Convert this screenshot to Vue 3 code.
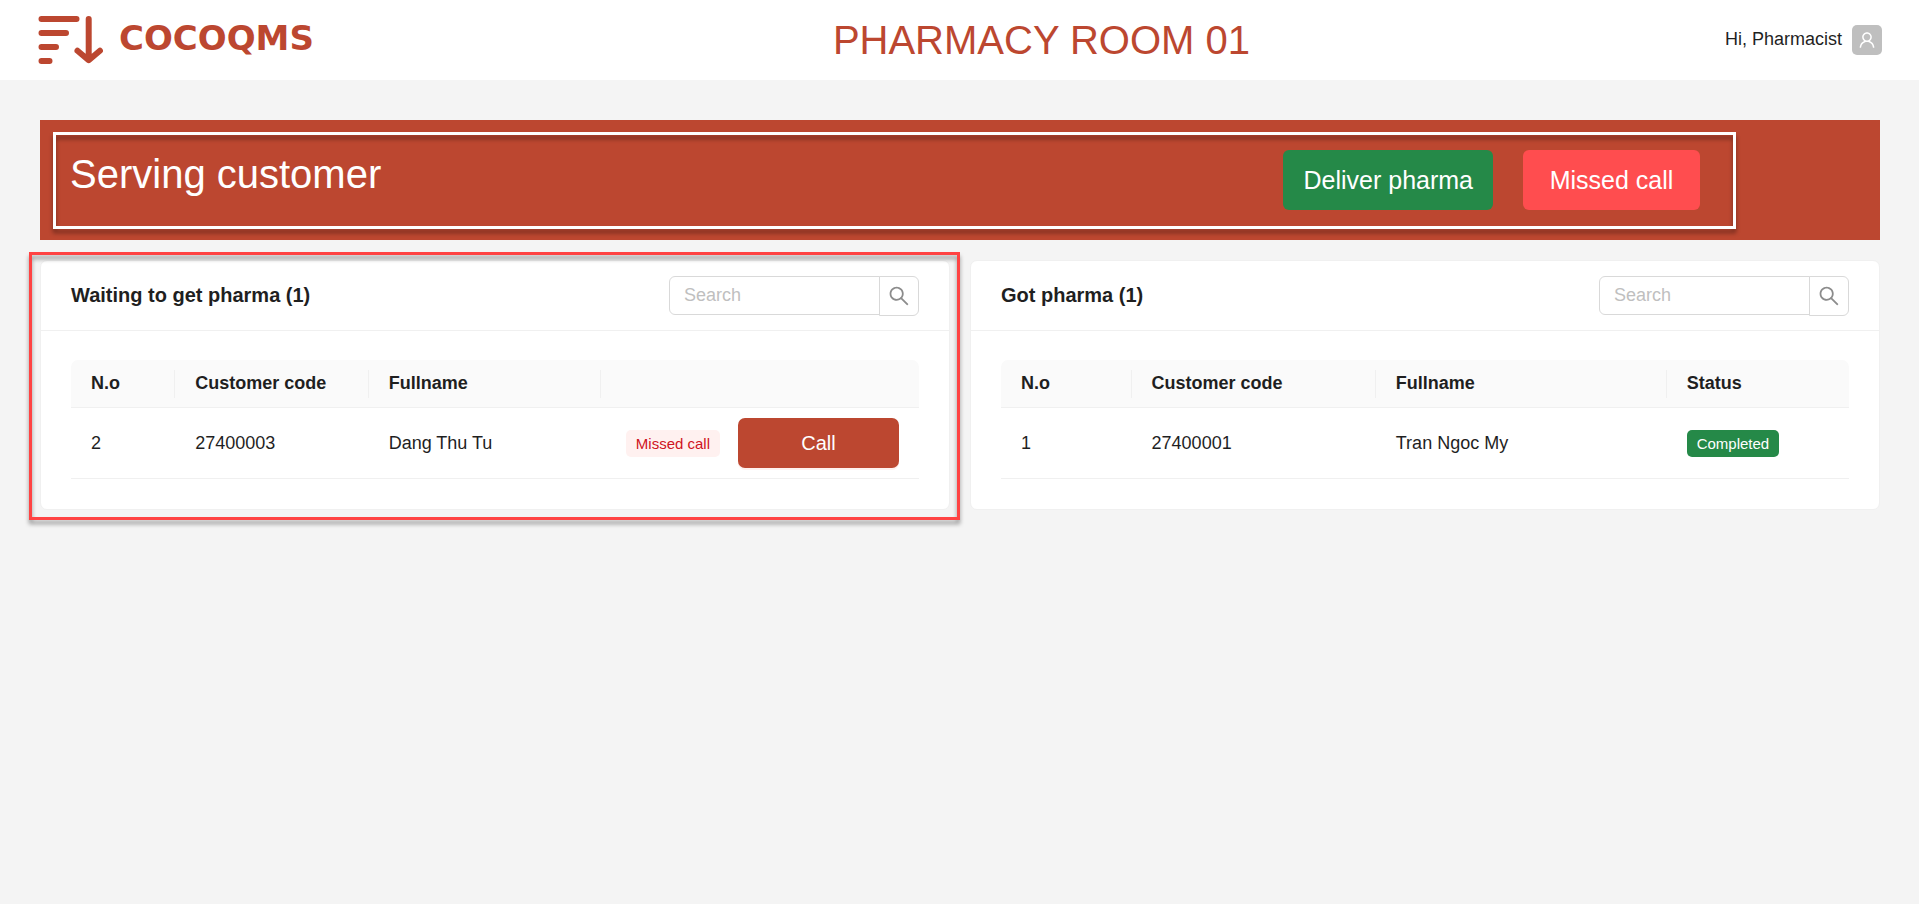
<template>
  <div class="page">
    <!-- header -->
    <header class="header">
      <a class="logo" href="#">
        <svg class="logo-icon" width="65" height="48" viewBox="0 0 65 48" aria-hidden="true">
          <path
            d="M3.5 3H38.5M3.5 17H28M3.5 31H18M3.5 45H11.5M50.7 3V43M39.5 34.8L50.7 44.2L61.9 34.8"
          />
        </svg>
        <span class="logo-text">COCOQMS</span>
      </a>
      <h1 class="room-title">PHARMACY ROOM 01</h1>
      <div class="user">
        <span class="user-name">Hi, Pharmacist</span>
        <button class="avatar" type="button" aria-label="Account">
          <svg width="20" height="20" viewBox="0 0 1024 1024" fill="currentColor">
            <path :d="userIcon" />
          </svg>
        </button>
      </div>
    </header>

    <main class="content">
      <!-- serving customer -->
      <section class="serving">
        <h2 class="serving-title">Serving customer</h2>
        <div class="serving-actions">
          <button class="btn btn-deliver" type="button">Deliver pharma</button>
          <button class="btn btn-missed" type="button">Missed call</button>
        </div>
        <div class="frame frame-white"></div>
      </section>

      <div class="cards">
        <!-- waiting list -->
        <section class="card">
          <div class="card-head">
            <h3 class="card-title">Waiting to get pharma ({{ waiting.length }})</h3>
            <form class="search" @submit.prevent>
              <input
                v-model="waitingSearch"
                class="search-input"
                type="text"
                placeholder="Search"
                aria-label="Search waiting customers"
              />
              <button class="search-btn" type="submit" aria-label="Search">
                <svg width="24" height="24" viewBox="0 0 1024 1024" fill="currentColor">
                  <path :d="searchIcon" />
                </svg>
              </button>
            </form>
          </div>
          <div class="card-body">
            <table class="table table-waiting">
              <thead>
                <tr>
                  <th class="col-no">N.o</th>
                  <th class="col-code">Customer code</th>
                  <th class="col-name">Fullname</th>
                  <th></th>
                </tr>
              </thead>
              <tbody>
                <tr v-for="item in waiting" :key="item.code">
                  <td>{{ item.no }}</td>
                  <td>{{ item.code }}</td>
                  <td>{{ item.name }}</td>
                  <td>
                    <div class="row-actions">
                      <span class="tag tag-missed">{{ item.status }}</span>
                      <button class="btn-call" type="button">Call</button>
                    </div>
                  </td>
                </tr>
              </tbody>
            </table>
          </div>
          <div class="frame frame-red"></div>
        </section>

        <!-- got list -->
        <section class="card">
          <div class="card-head">
            <h3 class="card-title">Got pharma ({{ got.length }})</h3>
            <form class="search" @submit.prevent>
              <input
                v-model="gotSearch"
                class="search-input"
                type="text"
                placeholder="Search"
                aria-label="Search served customers"
              />
              <button class="search-btn" type="submit" aria-label="Search">
                <svg width="24" height="24" viewBox="0 0 1024 1024" fill="currentColor">
                  <path :d="searchIcon" />
                </svg>
              </button>
            </form>
          </div>
          <div class="card-body">
            <table class="table table-got">
              <thead>
                <tr>
                  <th class="col-no">N.o</th>
                  <th class="col-code">Customer code</th>
                  <th class="col-name">Fullname</th>
                  <th>Status</th>
                </tr>
              </thead>
              <tbody>
                <tr v-for="item in got" :key="item.code">
                  <td>{{ item.no }}</td>
                  <td>{{ item.code }}</td>
                  <td>{{ item.name }}</td>
                  <td>
                    <div class="status-cell">
                      <span class="tag tag-completed">{{ item.status }}</span>
                    </div>
                  </td>
                </tr>
              </tbody>
            </table>
          </div>
        </section>
      </div>
    </main>
  </div>
</template>

<script setup>
import { ref } from "vue";

const waitingSearch = ref("");
const gotSearch = ref("");

const waiting = ref([
  { no: 2, code: "27400003", name: "Dang Thu Tu", status: "Missed call" },
]);

const got = ref([
  { no: 1, code: "27400001", name: "Tran Ngoc My", status: "Completed" },
]);

// icon paths
const searchIcon =
  "M909.6 854.5L649.9 594.8C690.2 542.7 712 479 712 412c0-80.2-31.3-155.4-87.9-212.1-56.6-56.7-132-87.9-212.1-87.9s-155.5 31.3-212.1 87.9C143.2 256.5 112 331.8 112 412c0 80.1 31.3 155.5 87.9 212.1C256.5 680.8 331.8 712 412 712c67 0 130.6-21.8 182.7-62l259.7 259.6a8.2 8.2 0 0011.6 0l43.6-43.5a8.2 8.2 0 000-11.6zM570.4 570.4C528 612.7 471.8 636 412 636s-116-23.3-158.4-65.6C211.3 528 188 471.8 188 412s23.3-116.1 65.6-158.4C296 211.3 352.2 188 412 188s116.1 23.2 158.4 65.6S636 352.2 636 412s-23.3 116.1-65.6 158.4z";
const userIcon =
  "M858.5 763.6a374 374 0 00-80.6-119.5 375.63 375.63 0 00-119.5-80.6c-.4-.2-.8-.3-1.2-.5C719.5 518 760 444.7 760 362c0-137-111-248-248-248S264 225 264 362c0 82.7 40.5 156 102.8 201.1-.4.2-.8.3-1.2.5-44.8 18.9-85 46-119.5 80.6a375.63 375.63 0 00-80.6 119.5A371.7 371.7 0 00136 901.8a8 8 0 008 8.2h60c4.4 0 7.9-3.5 8-7.8 2-77.2 33-149.5 87.8-204.3 56.7-56.7 132-87.9 212.2-87.9s155.5 31.2 212.2 87.9C779 752.7 810 825 812 902.2c.1 4.4 3.6 7.8 8 7.8h60a8 8 0 008-8.2c-1-47.8-10.9-94.3-29.5-138.2zM512 534c-45.9 0-89.1-17.9-121.6-50.4S340 407.9 340 362c0-45.9 17.9-89.1 50.4-121.6S466.1 190 512 190s89.1 17.9 121.6 50.4S684 316.1 684 362c0 45.9-17.9 89.1-50.4 121.6S557.9 534 512 534z";
</script>

<style>
body {
  background: #f4f4f4;
}
</style>

<style scoped>
* {
  box-sizing: border-box;
}

.page {
  min-height: 100vh;
  background: #f4f4f4;
  color: #1f1f1f;
  font-family: "Liberation Sans", Arial, sans-serif;
  font-size: 18px;
}

button,
input {
  margin: 0;
  font-family: inherit;
}

button {
  cursor: pointer;
}

h1,
h2,
h3 {
  margin: 0;
}

/* header */
.header {
  display: flex;
  align-items: center;
  justify-content: space-between;
  height: 80px;
  padding: 0 37px 0 38px;
  background: #fff;
}

.logo {
  display: flex;
  align-items: center;
  gap: 16px;
  padding-right: 44px;
  color: #bc4730;
  text-decoration: none;
}

.logo-icon {
  fill: none;
  stroke: currentColor;
  stroke-width: 6;
  stroke-linecap: round;
  stroke-linejoin: round;
}

.logo-text {
  padding-bottom: 4px;
  font-family: "DejaVu Sans", sans-serif;
  font-size: 34px;
  font-weight: 700;
}

.room-title {
  color: #bc4730;
  font-size: 40px;
  font-weight: 400;
}

.user {
  white-space: nowrap;
}

.user-name {
  margin-right: 10px;
}

.avatar {
  display: inline-flex;
  align-items: center;
  justify-content: center;
  width: 30px;
  height: 30px;
  padding: 0;
  border: 0;
  border-radius: 5px;
  background: #bfbfbf;
  color: #fff;
  vertical-align: middle;
}

/* content */
.content {
  padding: 40px 39px 40px 40px;
}

.serving {
  position: relative;
  display: flex;
  align-items: flex-start;
  justify-content: space-between;
  padding: 30px 180px 30px 30px;
  background: #bc4730;
}

.serving-title {
  color: #fff;
  font-size: 40px;
  font-weight: 400;
  line-height: 48px;
}

.serving-actions {
  display: flex;
  gap: 30px;
}

.btn {
  height: 60px;
  padding: 0 20px;
  border: 0;
  border-radius: 6px;
  color: #fff;
  font-size: 25px;
}

.btn-deliver {
  background: #258948;
}

.btn-missed {
  min-width: 177px;
  background: #ff4d4f;
}

/* highlight frames */
.frame {
  position: absolute;
  border: 3px solid;
  filter: drop-shadow(0 4px 2px rgba(0, 0, 0, 0.4));
  pointer-events: none;
}

.frame-white {
  top: 12px;
  right: 144px;
  bottom: 11px;
  left: 13px;
  border-color: #fff;
}

.frame-red {
  top: -9px;
  right: -11px;
  bottom: -11px;
  left: -12px;
  border-color: #ff4343;
}

/* cards */
.cards {
  display: grid;
  grid-template-columns: 1fr 1fr;
  gap: 20px;
  margin-top: 20px;
}

.card {
  position: relative;
  border: 1px solid #f0f0f0;
  border-radius: 7px;
  background: #fff;
}

.card-head {
  display: flex;
  align-items: center;
  justify-content: space-between;
  height: 70px;
  padding: 0 30px;
  border-bottom: 1px solid #f0f0f0;
}

.card-title {
  font-size: 20px;
  font-weight: 700;
}

.search {
  display: flex;
  align-items: flex-start;
  width: 250px;
}

.search-input {
  flex: 1;
  min-width: 0;
  height: 39px;
  padding: 0 14px;
  border: 1px solid #d9d9d9;
  border-radius: 6px 0 0 6px;
  outline: none;
  background: #fff;
  color: inherit;
  font-size: 18px;
}

.search-input::placeholder {
  color: #bfbfbf;
}

.search-btn {
  display: flex;
  align-items: center;
  justify-content: center;
  width: 40px;
  height: 40px;
  margin-left: -1px;
  padding: 0;
  border: 1px solid #d9d9d9;
  border-radius: 0 6px 6px 0;
  background: #fff;
  color: #8c8c8c;
}

.card-body {
  padding: 29px 30px 30px;
}

/* table */
.table {
  width: 100%;
  border-collapse: separate;
  border-spacing: 0;
  table-layout: fixed;
}

.table th,
.table td {
  padding: 0 20px;
  border-bottom: 1px solid #f0f0f0;
  text-align: left;
}

.table th {
  height: 48px;
  background-color: #fafafa;
  font-weight: 700;
}

/* column divider */
.table th:not(:last-child) {
  background-image: linear-gradient(#f0f0f0, #f0f0f0);
  background-origin: border-box;
  background-position: right center;
  background-repeat: no-repeat;
  background-size: 1px 28px;
}

.table th:first-child {
  border-top-left-radius: 7px;
}

.table th:last-child {
  border-top-right-radius: 7px;
}

.table td {
  height: 71px;
}

.table-waiting .col-no {
  width: 12.3%;
}

.table-waiting .col-code {
  width: 22.8%;
}

.table-waiting .col-name {
  width: 27.4%;
}

.table-got .col-no {
  width: 15.4%;
}

.table-got .col-code {
  width: 28.8%;
}

.table-got .col-name {
  width: 34.3%;
}

.row-actions {
  display: flex;
  align-items: center;
  justify-content: flex-end;
  gap: 18px;
}

.status-cell {
  display: flex;
}

.tag {
  padding: 0 10px;
  border-radius: 5px;
  font-size: 15px;
  line-height: 27px;
  white-space: nowrap;
}

.tag-missed {
  background: #fff1f0;
  color: #cf1322;
}

.tag-completed {
  background: #258948;
  color: #fff;
}

.btn-call {
  width: 161px;
  height: 50px;
  border: 0;
  border-radius: 7px;
  background: #bc4730;
  box-shadow: 0 2px 0 #fff1ee;
  color: #fff;
  font-size: 20px;
}
</style>
